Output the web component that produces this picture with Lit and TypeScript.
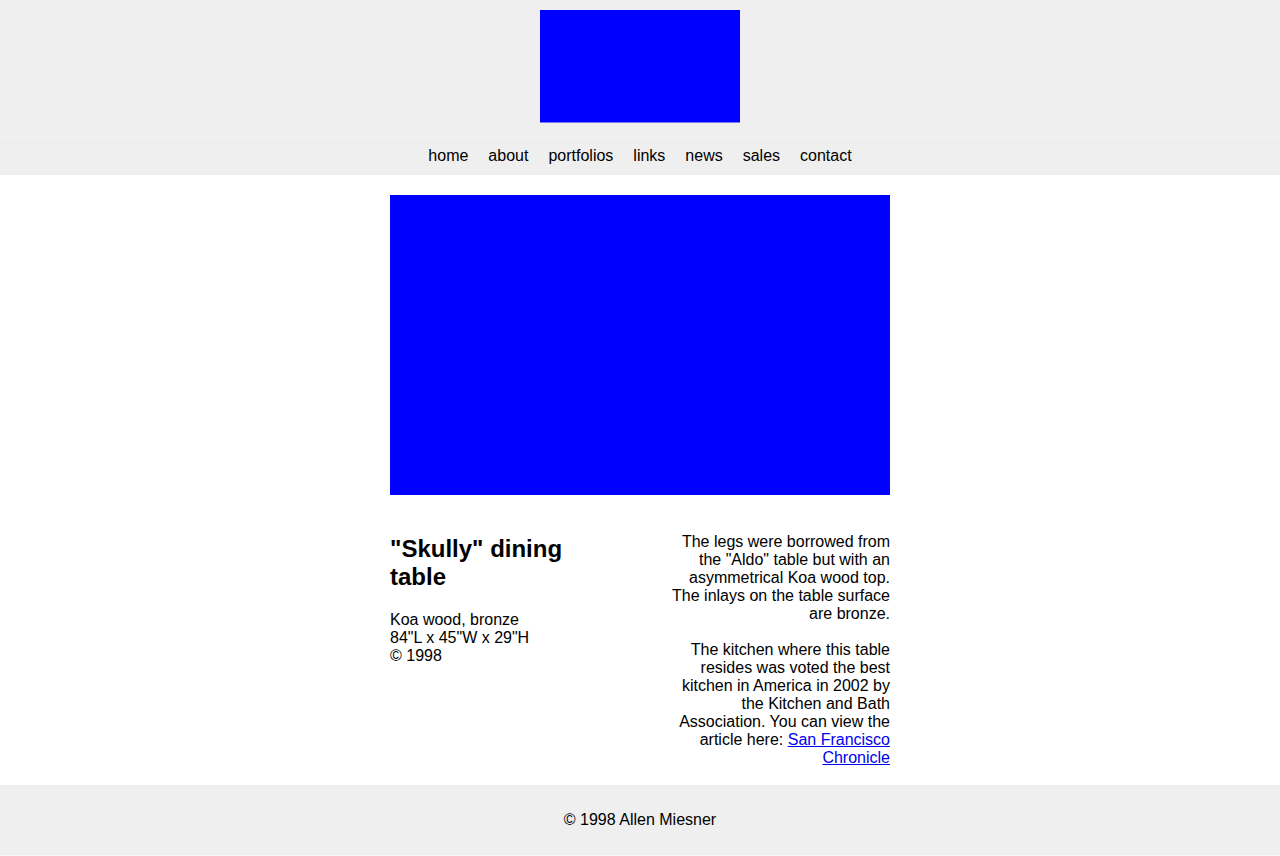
import { LitElement, html, css } from "lit";
import { customElement } from "lit/decorators.js";

const NAV_ITEMS = ["home", "about", "portfolios", "links", "news", "sales", "contact"];

@customElement("app-root")
export class AppRoot extends LitElement {
  static styles = css`
    :host {
      display: block;
      background: #fff;
      color: #000;
      font-family: "Liberation Sans", Arial, sans-serif;
      font-size: 16px;
      line-height: 18px;
    }
    .header {
      display: flex;
      justify-content: center;
      padding: 10px 10px 13px;
      background: #efefef;
    }
    .logo {
      width: 200px;
      height: 112px;
      background: #00f;
      border-bottom: 1px solid #7777f7;
    }
    .nav {
      display: flex;
      flex-wrap: wrap;
      justify-content: center;
      gap: 20px;
      padding: 10px;
      background: #efefef;
      border-top: 1px solid #f3f3f3;
    }
    .nav a {
      color: #000;
      text-decoration: none;
    }
    .main {
      box-sizing: border-box;
      max-width: 540px;
      margin: 0 auto;
      padding: 20px 20px 0;
    }
    .photo {
      aspect-ratio: 5 / 3;
      background: #00f;
    }
    .columns {
      display: flex;
      justify-content: space-between;
      margin-top: 20px;
    }
    .column {
      width: 44%;
    }
    .details {
      text-align: right;
    }
    h2 {
      margin: 20px 0;
      font-size: 24px;
      line-height: 28px;
    }
    p {
      margin: 18px 0;
    }
    .details a {
      color: #0000ee;
    }
    .footer {
      padding: 26px 10px;
      background: #efefef;
      border-bottom: 1px solid #f8f8f8;
      text-align: center;
    }
  `;

  render() {
    return html`
      <header class="header">
        <div class="logo" role="img" aria-label="Allen Miesner"></div>
      </header>
      <nav class="nav">
        ${NAV_ITEMS.map((item) => html`<a href="#${item}">${item}</a>`)}
      </nav>
      <main class="main">
        <div class="photo" role="img" aria-label="Skully dining table"></div>
        <div class="columns">
          <section class="column">
            <h2>"Skully" dining table</h2>
            <p>Koa wood, bronze<br />84"L x 45"W x 29"H<br />© 1998</p>
          </section>
          <section class="column details">
            <p>
              The legs were borrowed from the "Aldo" table but with an asymmetrical Koa wood top.
              The inlays on the table surface are bronze.
            </p>
            <p>
              The kitchen where this table resides was voted the best kitchen in America in 2002 by
              the Kitchen and Bath Association. You can view the article here:
              <a href="#chronicle">San Francisco Chronicle</a>
            </p>
          </section>
        </div>
      </main>
      <footer class="footer">© 1998 Allen Miesner</footer>
    `;
  }
}
